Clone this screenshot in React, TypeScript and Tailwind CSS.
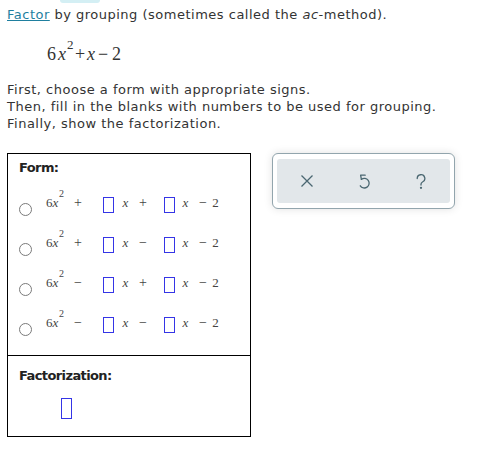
import React from "react";

const Box = ({ cls = "" }: { cls?: string }) => (
  <span className={`block w-[11px] h-[16px] border border-[#3535e6] ${cls}`} />
);

const Row = ({ s1, s2 }: { s1: string; s2: string }) => (
  <div className="flex items-start h-[40px] pl-[11px]">
    <div className="mt-[14px] w-[13px] h-[13px] rounded-full border border-[#7a7a7a] bg-white" />
    <div className="ml-[14px] flex items-start [font-family:'Liberation_Serif',serif] text-[#444]">
      <span className="mt-[6px] w-[13px] h-[16px] leading-[16px] text-[13px] whitespace-nowrap">
        6<i>x</i>
      </span>
      <span className="w-[6px] h-[10px] leading-[10px] text-[10px]">2</span>
      <span className="mt-[6px] ml-[8px] w-[10px] h-[16px] leading-[16px] text-[14px] text-center">{s1}</span>
      <Box cls="mt-[8px] ml-[20px]" />
      <span className="mt-[6px] ml-[8px] w-[7px] h-[16px] leading-[16px] text-[13px] text-center">
        <i>x</i>
      </span>
      <span className="mt-[6px] ml-[9px] w-[10px] h-[16px] leading-[16px] text-[14px] text-center">{s2}</span>
      <Box cls="mt-[8px] ml-[16px]" />
      <span className="mt-[6px] ml-[7px] w-[7px] h-[16px] leading-[16px] text-[13px] text-center">
        <i>x</i>
      </span>
      <span className="mt-[6px] ml-[9px] w-[10px] h-[16px] leading-[16px] text-[14px] text-center">−</span>
      <span className="mt-[6px] ml-[4px] w-[7px] h-[16px] leading-[16px] text-[13px] text-center">2</span>
    </div>
  </div>
);

export default function App() {
  return (
    <div className="w-[481px] h-[465px] bg-white text-[#333] overflow-hidden [font-family:'DejaVu_Sans',sans-serif]">
      <div className="ml-[60px] w-[40px] h-[3px] bg-[#d4eff4] rounded-b-[4px]" />
      <p className="mt-[3px] ml-[7px] text-[13px] leading-[17px] tracking-[0.5px] whitespace-nowrap">
        <span className="text-[#1f7f9f] underline">Factor</span> by grouping (sometimes called the{" "}
        <i>ac</i>-method).
      </p>
      <div className="mt-[19px] ml-[47px] h-[24px] flex items-baseline [font-family:'Liberation_Serif',serif] text-[18px] leading-[24px] text-[#333]">
        <span className="w-[9px]">6</span>
        <span className="ml-[1px] w-[10px] text-center">
          <i>x</i>
        </span>
        <span className="w-[6px] text-[13px] relative top-[-11px]">2</span>
        <span className="ml-[2px] w-[10px] text-center">+</span>
        <span className="ml-[1px] w-[10px] text-center">
          <i>x</i>
        </span>
        <span className="ml-[2px] w-[10px] text-center">−</span>
        <span className="ml-[4px] w-[8px] text-center">2</span>
      </div>
      <div className="mt-[15px] ml-[7px] text-[13px] leading-[17px] tracking-[0.5px] whitespace-nowrap">
        <div>First, choose a form with appropriate signs.</div>
        <div>Then, fill in the blanks with numbers to be used for grouping.</div>
        <div>Finally, show the factorization.</div>
      </div>
      <div className="mt-[21px] ml-[7px] flex items-start">
        <div className="w-[244px] border border-black">
          <div className="pt-[5px] pb-[6px] border-b border-black">
            <div className="pl-[11px] text-[13px] leading-[17px] font-bold tracking-[-0.6px] text-[#222]">Form:</div>
            <div className="mt-[13px]">
              <Row s1="+" s2="+" />
              <Row s1="+" s2="−" />
              <Row s1="−" s2="+" />
              <Row s1="−" s2="−" />
            </div>
          </div>
          <div className="pt-[11px] pb-[17px] pl-[11px]">
            <div className="text-[13px] leading-[17px] font-bold tracking-[-0.6px] text-[#222]">Factorization:</div>
            <span className="block mt-[14px] ml-[42px] w-[11px] h-[21px] border border-[#3535e6]" />
          </div>
        </div>
        <div className="ml-[21px] w-[183px] h-[56px] border border-[#92a5ad] rounded-[6px] px-[4px] py-[5px] bg-white shadow-[0_0_8px_rgba(0,0,0,0.12)]">
          <div className="h-full bg-[#e2e7ea] rounded-[3px] flex items-center pl-[1px]">
            <div className="w-[57px] flex justify-center">
              <svg width="12" height="12" viewBox="0 0 12 12" fill="none" stroke="#4a6771" strokeWidth="1.3">
                <path d="M0.5 0.5L11.5 11.5M11.5 0.5L0.5 11.5" />
              </svg>
            </div>
            <div className="w-[57px] flex justify-center">
              <svg width="14" height="16" viewBox="0 0 14 16" fill="none" stroke="#4a6771" strokeWidth="1.3" strokeLinecap="round" strokeLinejoin="round">
                <path d="M8.2 2.2 H3.6 L4.4 6.4" />
                <path d="M4.4 6.4 A4.8 4.8 0 1 1 3.3 12.8" />
              </svg>
            </div>
            <div className="w-[57px] flex justify-center">
              <svg width="10" height="15" viewBox="0 0 10 15" fill="none" stroke="#4a6771" strokeWidth="1.3" strokeLinecap="round">
                <path d="M1.2 4.5 A3.8 3.8 0 1 1 6.5 8 C5.3 8.6 5 9.3 5 10.3 V11" />
                <circle cx="5" cy="13.8" r="0.5" fill="#4a6771" />
              </svg>
            </div>
          </div>
        </div>
      </div>
    </div>
  );
}
